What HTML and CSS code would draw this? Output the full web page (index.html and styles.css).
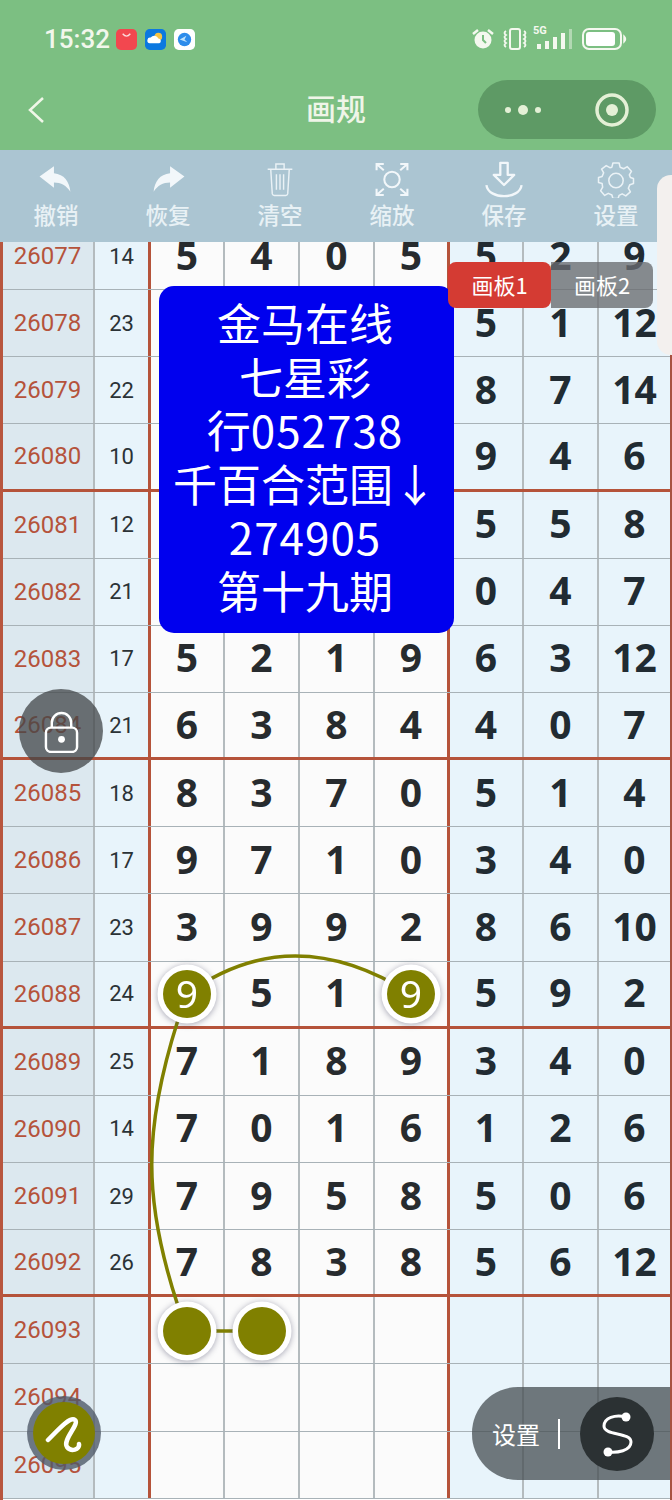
FILE: index.html
```html
<!DOCTYPE html>
<html lang="zh">
<head>
<meta charset="utf-8">
<title>画规</title>
<link rel="stylesheet" href="styles.css">
</head>
<body>
<div class="page">
  <header class="header">
    <div class="status">
      <div class="status-left">
        <span class="clock">15:32</span>
        <svg class="app" viewBox="0 0 22 22"><rect width="22" height="22" rx="5" fill="#F2474F"/><path d="M7 5q4 5 8 0" fill="none" stroke="#fff" stroke-width="1.4" opacity=".8"/></svg>
        <svg class="app" viewBox="0 0 22 22"><rect width="22" height="22" rx="5" fill="#0B78E0"/><circle cx="14" cy="8" r="4" fill="#F6C343"/><path d="M5 15a3 3 0 0 1 1-6 4.500 4.500 0 0 1 8 1 2.600 2.600 0 0 1 1 5z" fill="#fff"/></svg>
        <svg class="app" viewBox="0 0 22 22"><rect width="22" height="22" rx="5" fill="#fff"/><circle cx="11" cy="11" r="7" fill="#2D8CEB"/><path d="M6 11l7-4-2 4 3 3z" fill="#BFE3FB"/></svg>
      </div>
      <div class="status-right">
        <svg class="s-alarm" viewBox="0 0 24 24"><circle cx="12" cy="13" r="8.500" fill="#F4F8EF"/><path d="M12 8v5l3 3" fill="none" stroke="#7CBF82" stroke-width="2"/><path d="M2 7l5-4M22 7l-5-4" stroke="#F4F8EF" stroke-width="2.500"/></svg>
        <svg class="s-vib" viewBox="0 0 28 22"><rect x="9" y="1" width="10" height="20" rx="2" fill="none" stroke="#F4F8EF" stroke-width="2"/><path d="M5 3q-3 2 0 4-3 2 0 4-3 2 0 4-3 2 0 4M23 3q3 2 0 4 3 2 0 4 3 2 0 4 3 2 0 4" fill="none" stroke="#F4F8EF" stroke-width="1.800"/></svg>
        <span class="s-net"><span class="s-5g">5G</span>
          <svg class="s-bars" viewBox="0 0 38 22"><path d="M2 16h4v5H2zM10 13h4v8h-4zM18 9h4v12h-4zM26 5h4v16h-4z" fill="#F4F8EF"/><path d="M34 1h3v20h-3z" fill="#F4F8EF" opacity=".45"/></svg>
        </span>
        <svg class="s-batt" viewBox="0 0 46 24"><rect x="1" y="2" width="38" height="20" rx="6" fill="none" stroke="#F4F8EF" stroke-width="2"/><rect x="4" y="5" width="29" height="14" rx="3" fill="#fff"/><path d="M42 9q3 3 0 6z" fill="#F4F8EF" stroke="#F4F8EF" stroke-width="1.500"/></svg>
      </div>
    </div>
    <div class="nav">
      <svg class="back" viewBox="0 0 20 30"><path d="M17 3L4 15l13 12" fill="none" stroke="#F0F7E8" stroke-width="2.500"/></svg>
      <h1 class="title">画规</h1>
      <div class="capsule">
        <span class="more"><i class="dot"></i><i class="dot big"></i><i class="dot"></i></span>
        <svg class="target" viewBox="0 0 34 34"><circle cx="17" cy="17" r="15" fill="none" stroke="#E4F0D6" stroke-width="3.500"/><circle cx="17" cy="17" r="6" fill="#E4F0D6"/></svg>
      </div>
    </div>
  </header>

  <nav class="toolbar">
    <div class="tool">
      <svg class="tool-icon" viewBox="0 0 36 36"><path d="M2 15L16 5v7c10 1 15 8 16 18-4-6-9-9-16-9v5z" fill="#F2F7FA"/></svg>
      <span>撤销</span>
    </div>
    <div class="tool">
      <svg class="tool-icon" viewBox="0 0 36 36"><path d="M34 15L20 5v7C10 13 5 20 4 30c4-6 9-9 16-9v5z" fill="#F2F7FA"/></svg>
      <span>恢复</span>
    </div>
    <div class="tool">
      <svg class="tool-icon" viewBox="0 0 36 36"><path d="M6 8h24M14 8V3h8v5M9 8l1.500 24a2 2 0 0 0 2 1.500h11a2 2 0 0 0 2-1.500L27 8M14.500 13v15M18 13v15M21.500 13v15" fill="none" stroke="#EAF2F6" stroke-width="1.400"/></svg>
      <span>清空</span>
    </div>
    <div class="tool">
      <svg class="tool-icon" viewBox="0 0 36 36"><circle cx="18" cy="18" r="7.500" fill="none" stroke="#F2F7FA" stroke-width="2"/><path d="M3 9V3h7M3 3l7 6M33 9V3h-7M33 3l-7 6M3 27v6h7M3 33l7-6M33 27v6h-7M33 33l-7-6" fill="none" stroke="#F2F7FA" stroke-width="2"/></svg>
      <span>缩放</span>
    </div>
    <div class="tool">
      <svg class="tool-icon" viewBox="0 0 44 40"><path d="M18 2h8v13h7L22 26 11 15h7z" fill="none" stroke="#F2F7FA" stroke-width="2.500" stroke-linejoin="round"/><path d="M3 26c2 16 36 16 38 0" fill="none" stroke="#F2F7FA" stroke-width="2.500"/></svg>
      <span>保存</span>
    </div>
    <div class="tool">
      <svg class="tool-icon" viewBox="0 0 36 36"><path d="M15 2h6l1 4 3.500 1.500 3.500-2 4 4.500-2 3.500L32 16l3 1v5l-3.500 1-1.500 3.500 2 3.500-4.500 4-3.500-2-3 1.500-1 3h-5l-1-3.500-3.500-1.500-3.500 2-4-4.500 2-3.500L4.500 22 1 21v-5l3.500-1L6 11.500 4 8l4.500-3.500L12 6.500 14 6z" fill="none" stroke="#EAF2F6" stroke-width="1.500" stroke-linejoin="round"/><circle cx="18" cy="19" r="7" fill="none" stroke="#EAF2F6" stroke-width="1.500"/></svg>
      <span>设置</span>
    </div>
  </nav>

  <main class="board">
    <div class="rows">
      <div class="row"><b class="cell id">26077</b><b class="cell sum">14</b><b class="cell n first">5</b><b class="cell n">4</b><b class="cell n">0</b><b class="cell n c4">5</b><b class="cell n blue first">5</b><b class="cell n blue">2</b><b class="cell n blue last">9</b></div>
      <div class="row"><b class="cell id">26078</b><b class="cell sum">23</b><b class="cell n first"></b><b class="cell n"></b><b class="cell n"></b><b class="cell n c4"></b><b class="cell n blue first">5</b><b class="cell n blue">1</b><b class="cell n blue last">12</b></div>
      <div class="row"><b class="cell id">26079</b><b class="cell sum">22</b><b class="cell n first"></b><b class="cell n"></b><b class="cell n"></b><b class="cell n c4"></b><b class="cell n blue first">8</b><b class="cell n blue">7</b><b class="cell n blue last">14</b></div>
      <div class="row sep"><b class="cell id">26080</b><b class="cell sum">10</b><b class="cell n first"></b><b class="cell n"></b><b class="cell n"></b><b class="cell n c4"></b><b class="cell n blue first">9</b><b class="cell n blue">4</b><b class="cell n blue last">6</b></div>
      <div class="row"><b class="cell id">26081</b><b class="cell sum">12</b><b class="cell n first"></b><b class="cell n"></b><b class="cell n"></b><b class="cell n c4"></b><b class="cell n blue first">5</b><b class="cell n blue">5</b><b class="cell n blue last">8</b></div>
      <div class="row"><b class="cell id">26082</b><b class="cell sum">21</b><b class="cell n first"></b><b class="cell n"></b><b class="cell n"></b><b class="cell n c4"></b><b class="cell n blue first">0</b><b class="cell n blue">4</b><b class="cell n blue last">7</b></div>
      <div class="row"><b class="cell id">26083</b><b class="cell sum">17</b><b class="cell n first">5</b><b class="cell n">2</b><b class="cell n">1</b><b class="cell n c4">9</b><b class="cell n blue first">6</b><b class="cell n blue">3</b><b class="cell n blue last">12</b></div>
      <div class="row sep"><b class="cell id">26084</b><b class="cell sum">21</b><b class="cell n first">6</b><b class="cell n">3</b><b class="cell n">8</b><b class="cell n c4">4</b><b class="cell n blue first">4</b><b class="cell n blue">0</b><b class="cell n blue last">7</b></div>
      <div class="row"><b class="cell id">26085</b><b class="cell sum">18</b><b class="cell n first">8</b><b class="cell n">3</b><b class="cell n">7</b><b class="cell n c4">0</b><b class="cell n blue first">5</b><b class="cell n blue">1</b><b class="cell n blue last">4</b></div>
      <div class="row"><b class="cell id">26086</b><b class="cell sum">17</b><b class="cell n first">9</b><b class="cell n">7</b><b class="cell n">1</b><b class="cell n c4">0</b><b class="cell n blue first">3</b><b class="cell n blue">4</b><b class="cell n blue last">0</b></div>
      <div class="row"><b class="cell id">26087</b><b class="cell sum">23</b><b class="cell n first">3</b><b class="cell n">9</b><b class="cell n">9</b><b class="cell n c4">2</b><b class="cell n blue first">8</b><b class="cell n blue">6</b><b class="cell n blue last">10</b></div>
      <div class="row sep"><b class="cell id">26088</b><b class="cell sum">24</b><b class="cell n first"></b><b class="cell n">5</b><b class="cell n">1</b><b class="cell n c4"></b><b class="cell n blue first">5</b><b class="cell n blue">9</b><b class="cell n blue last">2</b></div>
      <div class="row"><b class="cell id">26089</b><b class="cell sum">25</b><b class="cell n first">7</b><b class="cell n">1</b><b class="cell n">8</b><b class="cell n c4">9</b><b class="cell n blue first">3</b><b class="cell n blue">4</b><b class="cell n blue last">0</b></div>
      <div class="row"><b class="cell id">26090</b><b class="cell sum">14</b><b class="cell n first">7</b><b class="cell n">0</b><b class="cell n">1</b><b class="cell n c4">6</b><b class="cell n blue first">1</b><b class="cell n blue">2</b><b class="cell n blue last">6</b></div>
      <div class="row"><b class="cell id">26091</b><b class="cell sum">29</b><b class="cell n first">7</b><b class="cell n">9</b><b class="cell n">5</b><b class="cell n c4">8</b><b class="cell n blue first">5</b><b class="cell n blue">0</b><b class="cell n blue last">6</b></div>
      <div class="row sep"><b class="cell id">26092</b><b class="cell sum">26</b><b class="cell n first">7</b><b class="cell n">8</b><b class="cell n">3</b><b class="cell n c4">8</b><b class="cell n blue first">5</b><b class="cell n blue">6</b><b class="cell n blue last">12</b></div>
      <div class="row"><b class="cell id">26093</b><b class="cell sum"></b><b class="cell n first"></b><b class="cell n"></b><b class="cell n"></b><b class="cell n c4"></b><b class="cell n blue first"></b><b class="cell n blue"></b><b class="cell n blue last"></b></div>
      <div class="row"><b class="cell id">26094</b><b class="cell sum"></b><b class="cell n first"></b><b class="cell n"></b><b class="cell n"></b><b class="cell n c4"></b><b class="cell n blue first"></b><b class="cell n blue"></b><b class="cell n blue last"></b></div>
      <div class="row"><b class="cell id">26095</b><b class="cell sum"></b><b class="cell n first"></b><b class="cell n"></b><b class="cell n"></b><b class="cell n c4"></b><b class="cell n blue first"></b><b class="cell n blue"></b><b class="cell n blue last"></b></div>
    </div>

    <svg class="drawing" viewBox="0 0 672 1258">
      <g transform="translate(0 -242)">
        <path class="stroke" d="M187 994Q292 918 411 994"/>
        <path class="stroke" d="M178 1020C143 1130 143 1200 178 1306"/>
        <path class="stroke" d="M187 1331H262"/>
        <g class="node"><circle class="ring" cx="187" cy="994" r="29.500"/><circle class="fill" cx="187" cy="994" r="24"/><text class="node-text" x="187" y="1008">9</text></g>
        <g class="node"><circle class="ring" cx="411" cy="994" r="29.500"/><circle class="fill" cx="411" cy="994" r="24"/><text class="node-text" x="411" y="1008">9</text></g>
        <g class="node"><circle class="ring" cx="187" cy="1331" r="29.500"/><circle class="fill" cx="187" cy="1331" r="24"/></g>
        <g class="node"><circle class="ring" cx="262" cy="1331" r="29.500"/><circle class="fill" cx="262" cy="1331" r="24"/></g>
      </g>
    </svg>

    <div class="notice">金马在线<br>七星彩<br>行<span class="num">052738</span><br>千百合范围↓<br><span class="num">274905</span><br>第十九期</div>

    <div class="tabs">
      <span class="tab active">画板1</span>
      <span class="tab">画板2</span>
    </div>

    <div class="lock">
      <svg viewBox="0 0 36 44"><path d="M8 18V13a10 10 0 0 1 20 0v5" fill="none" stroke="#fff" stroke-width="2.500"/><rect x="2" y="18" width="32" height="25" rx="5" fill="none" stroke="#fff" stroke-width="2.500"/><circle cx="18" cy="30" r="3.500" fill="#fff"/></svg>
    </div>

    <div class="pen">
      <span class="pen-inner">
        <svg viewBox="0 0 40 40"><path d="M4 27C14 17 26 3 31 7C36 11 18 27 23 34C27 39 36 37 35 31" fill="none" stroke="#fff" stroke-width="4.500" stroke-linecap="round" stroke-linejoin="round"/></svg>
      </span>
    </div>

    <div class="pill">
      <span class="pill-label">设置</span>
      <i class="pill-div"></i>
      <span class="pill-btn">
        <svg viewBox="0 0 40 46"><path d="M29 6C18 3 7 7 7 15C7 25 34 21 34 31C34 40 20 42 11 41" fill="none" stroke="#fff" stroke-width="3"/><circle cx="29" cy="6" r="4.500" fill="#fff"/><circle cx="11" cy="41" r="4.500" fill="#fff"/></svg>
      </span>
    </div>
  </main>

  <div class="side-panel"></div>
</div>
</body>
</html>
```

FILE: styles.css
```css
* { box-sizing: border-box; }
html, body { margin: 0; padding: 0; }
body { width: 672px; height: 1500px; overflow: hidden; background: #fff; font-family: Roboto, "Noto Sans CJK SC", sans-serif; }
.page { position: relative; width: 672px; height: 1500px; display: flex; flex-direction: column; }

.header { height: 150px; background: #7CBF82; flex: none; display: flex; flex-direction: column; }
.status { height: 80px; display: flex; justify-content: space-between; align-items: center; padding: 0 44px 2px 44px; }
.status-left, .status-right { display: flex; align-items: center; }
.clock { font-size: 26px; font-weight: 500; color: #F2F7EC; margin-right: 6px; width: 66px; }
.app { width: 21px; height: 21px; margin-right: 8px; }
.s-alarm { width: 24px; height: 24px; margin-right: 6px; }
.s-vib { width: 28px; height: 22px; margin-right: 6px; }
.s-net { position: relative; width: 38px; height: 22px; margin-right: 9px; display: block; }
.s-bars { width: 38px; height: 22px; display: block; }
.s-5g { position: absolute; left: -2px; top: -3px; font-size: 11px; line-height: 12px; color: #F4F8EF; font-weight: 700; }
.s-batt { width: 46px; height: 24px; }

.nav { height: 70px; position: relative; display: flex; align-items: center; justify-content: center; }
.back { position: absolute; left: 26px; top: 15px; width: 20px; height: 30px; }
.title { margin: 0 0 16px; font-size: 30px; line-height: 40px; font-weight: 500; color: #EFF5E8; font-family: "Noto Sans CJK SC", sans-serif; }
.capsule { position: absolute; left: 478px; top: 0; width: 178px; height: 59px; border-radius: 30px; background: #5E9A65; display: flex; align-items: center; justify-content: space-between; padding: 0 27px; }
.more { display: flex; align-items: center; gap: 7px; }
.dot { width: 6px; height: 6px; border-radius: 50%; background: #E4F0D6; display: block; }
.dot.big { width: 10px; height: 10px; }
.target { width: 34px; height: 34px; }

.toolbar { height: 92px; flex: none; background: #ABC5D2; display: grid; grid-template-columns: repeat(6, 112px); position: relative; z-index: 2; }
.tool { display: flex; flex-direction: column; align-items: center; color: #E8F1F5; font-size: 22.500px; line-height: 30px; font-family: "Noto Sans CJK SC", sans-serif; padding-top: 11px; }
.tool span { margin-top: 1px; font-weight: 500; }
.tool-icon { height: 37px; width: 42px; display: block; }

.board { position: relative; flex: none; height: 1258px; overflow: hidden; border-left: 3px solid #B8563F; border-right: 2px solid #A85140; }
.rows { margin: -19px 0 0; }
.row { height: 67.150px; display: grid; grid-template-columns: 92px 53px 77px 75px 75px 72px 77px 75px 71px; border-bottom: 1px solid #A8B2B7; }
.row.sep { border-bottom: 3px solid #B5533A; }
.cell { display: flex; align-items: center; justify-content: center; border-right: 2px solid #B4BBBE; font-weight: 400; }
.id { background: #DCE8EF; color: #B5533B; font-size: 24px; padding-right: 1px; }
.sum { background: #E8F4FB; color: #2B3236; font-size: 22px; border-right: 0; }
.n { background: #FBFBFB; color: #272B2E; font-family: "Noto Sans", sans-serif; font-weight: 700; font-size: 39px; padding-bottom: 4px; }
.n.first { border-left: 3px solid #B5533A; }
.n.c4 { border-right: 0; }
.n.blue { background: #E8F4FB; color: #212B32; }
.n.last { border-right: 0; }

.drawing { position: absolute; left: -3px; top: 0; width: 672px; height: 1258px; pointer-events: none; }
.stroke { fill: none; stroke: #808000; stroke-width: 3.500px; }
.node { filter: drop-shadow(0 1px 3px rgba(60,60,90,.45)); }
.ring { fill: #fff; }
.fill { fill: #808000; }
.node-text { fill: #fff; font-family: "Noto Sans", sans-serif; font-size: 39px; text-anchor: middle; }

.side-panel { position: absolute; left: 657px; top: 175px; width: 15px; height: 180px; border-radius: 14px 0 0 14px; background: #F3F0EE; z-index: 3; }
.notice { position: absolute; left: 156px; top: 44px; width: 295px; height: 347px; padding: 10px 3px 0 0; border-radius: 15px; background: #0000EE; color: #fff; text-align: center; font-size: 44px; line-height: 53.500px; font-family: "Noto Sans CJK SC", sans-serif; }
.num { letter-spacing: 1px; }

.tabs { position: absolute; left: 445px; top: 20px; display: flex; color: #fff; font-size: 22px; font-family: "Noto Sans CJK SC", sans-serif; }
.tab { width: 102px; height: 46px; padding-bottom: 3px; display: flex; align-items: center; justify-content: center; background: rgba(105,108,112,.78); border-radius: 0 8px 8px 0; }
.tab.active { width: 103px; background: #D43B33; border-radius: 8px; }

.lock { position: absolute; left: 16px; top: 447px; width: 84px; height: 84px; border-radius: 50%; background: rgba(65,70,72,.75); display: flex; align-items: center; justify-content: center; }
.lock svg { width: 35px; height: 43px; }

.pen { position: absolute; left: 24px; top: 1154px; width: 74px; height: 74px; border-radius: 50%; background: rgba(80,90,105,.8); display: flex; align-items: center; justify-content: center; }
.pen-inner { width: 62px; height: 62px; border-radius: 50%; background: #808000; display: flex; align-items: center; justify-content: center; }
.pen-inner svg { width: 40px; height: 40px; }

.pill { position: absolute; left: 469px; top: 1145px; width: 203px; height: 93px; border-radius: 46px 0 0 46px; background: rgba(70,78,82,.75); display: flex; align-items: center; padding-left: 20px; }
.pill-label { color: #fff; font-size: 24px; font-family: "Noto Sans CJK SC", sans-serif; width: 49px; }
.pill-div { width: 2px; height: 30px; background: #fff; margin-left: 17px; margin-right: 20px; display: block; }
.pill-btn { width: 74px; height: 74px; border-radius: 50%; background: #2B3133; display: flex; align-items: center; justify-content: center; }
.pill-btn svg { width: 40px; height: 46px; }
```
